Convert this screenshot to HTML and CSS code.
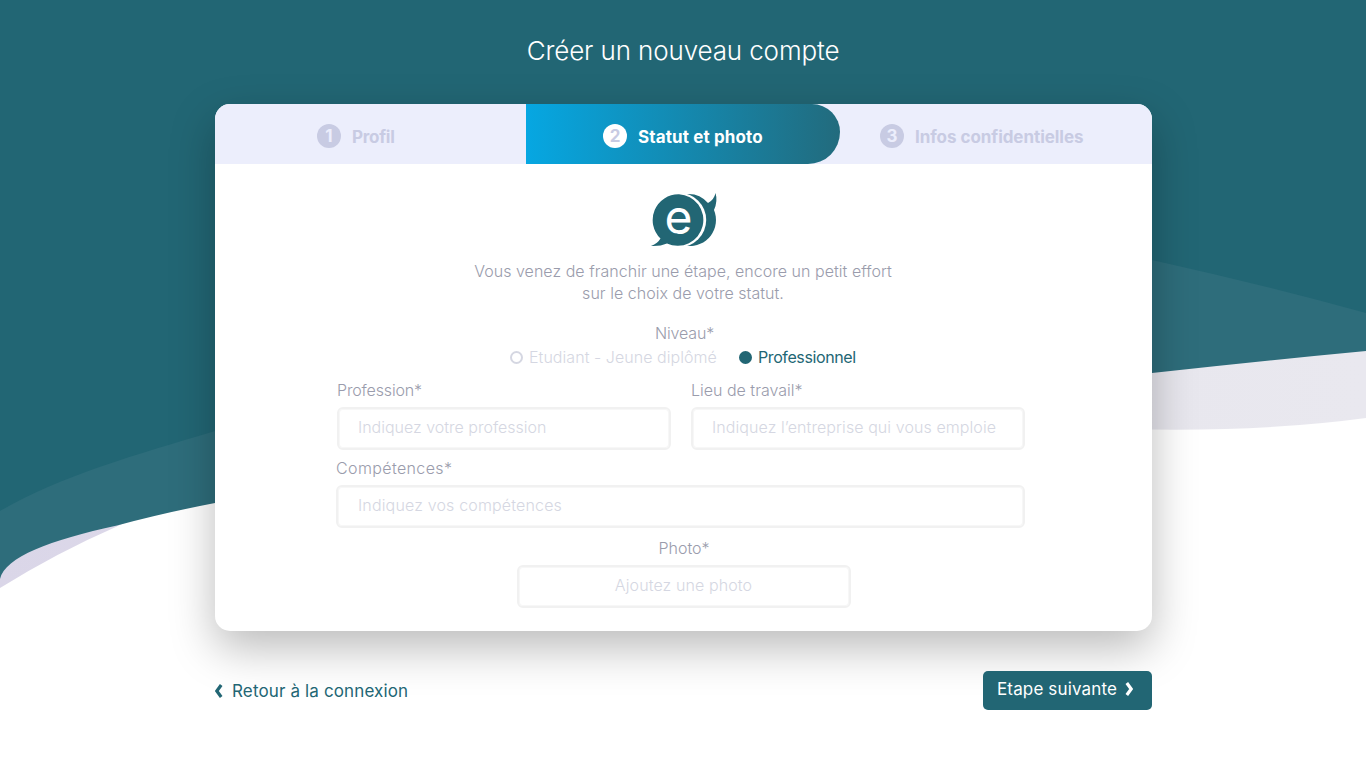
FILE: index.html
```html
<!DOCTYPE html>
<html lang="fr">
<head>
<meta charset="utf-8">
<title>Créer un nouveau compte</title>
<link rel="stylesheet" href="styles.css">
</head>
<body>
<svg class="waves" viewBox="0 0 1366 768" aria-hidden="true">
  <defs>
    <linearGradient id="mist" x1="0" x2="1" y1="0" y2="0"><stop offset="0" stop-color="#dad6e8"/><stop offset=".1" stop-color="#dcd8e9"/><stop offset=".85" stop-color="#e8e7ee"/><stop offset="1" stop-color="#e9e8ef"/></linearGradient>
  </defs>
  <path fill="url(#mist)" d="M0 588Q58 552 118 526C250 465 400 440 600 400C800 380 950 429 1152 429.5Q1270 431 1366 418V340H0Z"/>
  <path fill="#fff" d="M117 526.500Q165 505 230 480H1140V560H117Z"/>
  <path fill="#2e6d7b" d="M0 579C5 557 50 540 117 525.500Q163 513 215 503C450 440 750 405 1152 373Q1260 361 1366 351V200H0Z"/>
  <path fill="#226674" d="M0 511C60 476 135 455 215 431C500 320 850 200 1152 260Q1260 284 1366 313V0H0Z"/>
</svg>
<main class="page">
  <h1 class="title">Créer un nouveau compte</h1>
  <section class="card">
    <ol class="steps">
      <li class="step step-profile"><span class="num">1</span><span class="name-profile">Profil</span></li>
      <li class="step step-active"><span class="num">2</span><span class="name-status">Statut et photo</span></li>
      <li class="step step-private"><span class="num">3</span><span>Infos confidentielles</span></li>
    </ol>
    <div class="body">
      <svg class="logo" viewBox="0 0 66 54">
        <path fill="#226674" d="M34 1.200A26 26 0 0 1 57 10Q63 7 64.500 0Q67 8 63 17A26 26 0 0 1 36 52.800Z"/>
        <circle cx="28" cy="27" r="27.200" fill="#fff"/>
        <path fill="#226674" d="M28 1.200A25.800 25.800 0 1 1 16 50.500Q9 53.500 0 53Q7 50 9.500 45.500A25.800 25.800 0 0 1 28 1.200Z"/>
        <text class="logo-e" x="13.500" y="41.300">e</text>
      </svg>
      <p class="intro">Vous venez de franchir une étape, encore un petit effort<br>sur le choix de votre statut.</p>
      <div class="label level">Niveau*</div>
      <div class="choices">
        <label class="choice"><i class="dot"></i><span>Etudiant - Jeune diplômé</span></label>
        <label class="choice on"><i class="dot"></i><span>Professionnel</span></label>
      </div>
      <div class="row">
        <div class="field job"><div class="label">Profession*</div><div class="input">Indiquez votre profession</div></div>
        <div class="field place"><div class="label">Lieu de travail*</div><div class="input">Indiquez l’entreprise qui vous emploie</div></div>
      </div>
      <div class="field skills"><div class="label">Compétences*</div><div class="input">Indiquez vos compétences</div></div>
      <div class="field photo"><div class="label">Photo*</div><div class="input">Ajoutez une photo</div></div>
    </div>
  </section>
  <nav class="actions">
    <a class="back"><svg width="8" height="14" viewBox="0 0 8 14"><path d="M6.200 1L1.800 7L6.200 13"/></svg><span>Retour à la connexion</span></a>
    <button class="next"><span>Etape suivante</span><svg width="8" height="14" viewBox="0 0 8 14"><path d="M1.800 1L6.200 7L1.800 13"/></svg></button>
  </nav>
</main>
</body>
</html>
```
FILE: styles.css
```css
* { box-sizing: border-box; }
body { margin: 0; background: #fff; font-family: Inter, "Open Sans", sans-serif; font-size: 16px; font-weight: 300; }
.waves { position: absolute; inset: 0; width: 1366px; height: 768px; z-index: -1; }
.page { width: 937px; height: 768px; margin: 0 0 0 215px; }
.title { margin: 0; height: 104px; line-height: 102px; text-align: center; text-indent: -1px; color: #fff; font-size: 26px; font-weight: 350; letter-spacing: -.13px; }
.card { height: 527px; border-radius: 15px; background: #fff; box-shadow: 0 17px 45px rgba(0,0,0,.27); overflow: hidden; }
.steps { display: grid; grid-template-columns: 311px 314px 312px; height: 60px; margin: 0; padding: 0; list-style: none; background: #eceefc; }
.step { display: flex; padding-top: 20px; gap: 11px; color: #c8cbe3; font-size: 17px; font-weight: 700; line-height: 26px; letter-spacing: -.05px; white-space: nowrap; }
.step-profile { padding-left: 102px; }
.step-active { padding-left: 77px; color: #fff; background: linear-gradient(90deg, #06a7e2, #226b7d); border-radius: 0 28px 32px 0; }
.step-private { padding-left: 40px; }
.name-profile { letter-spacing: -.25px; }
.name-status { letter-spacing: .12px; }
.num { width: 24px; height: 24px; border-radius: 50%; background: #c8cbe3; color: #eceefc; text-align: center; line-height: 24px; }
.step-active .num { background: #fff; color: #c8cbe3; }
.body { padding: 29px 127px 0 122px; color: #9a9cac; }
.logo { display: block; width: 66px; height: 54px; margin-left: 314px; overflow: visible; }
.logo-e { font: 400 48px Inter, sans-serif; fill: #fff; }
.intro { margin: 13px 0 0 4px; text-align: center; line-height: 22px; white-space: nowrap; letter-spacing: .03px; }
.label { height: 22px; line-height: 22px; }
.level { margin: 18px 0 0 7px; text-align: center; letter-spacing: -.15px; }
.choices { display: flex; gap: 22px; margin: 2px 0 0 173px; line-height: 22px; color: #d5d7e2; letter-spacing: .05px; }
.choice { display: flex; align-items: center; gap: 6px; }
.dot { width: 13px; height: 13px; border: 2px solid #d5d7e2; border-radius: 50%; }
.on { color: #226674; font-weight: 400; letter-spacing: -.38px; }
.on .dot { background: #226674; border-color: #226674; }
.row { display: grid; grid-template-columns: 334px 334px; gap: 20px; margin-top: 11px; }
.job .label { letter-spacing: -.15px; }
.place .input { letter-spacing: .08px; }
.input { height: 43px; margin-top: 6px; padding-left: 19px; border: 2px solid #f1f1f1; border-radius: 6px; box-shadow: inset 0 0 0 1px #f7f7f7; line-height: 36px; color: #d5d7e2; white-space: nowrap; }
.skills { margin: 7px 0 0 -1px; }
.skills .label { letter-spacing: .38px; }
.skills .input { padding-left: 20px; letter-spacing: .16px; }
.photo { width: 334px; margin: 9px 0 0 180px; text-align: center; }
.photo .input { padding: 0 1px 0 0; letter-spacing: .1px; }
.actions { display: flex; justify-content: space-between; align-items: flex-start; margin-top: 40px; color: #226674; font-size: 17px; font-weight: 400; }
.actions svg { fill: none; stroke: currentColor; stroke-width: 3.200; }
.back { display: flex; align-items: center; gap: 9px; height: 40px; letter-spacing: .14px; }
.next { display: flex; align-items: center; gap: 8px; width: 169px; height: 39px; padding: 0 0 3px 14px; border: 0; border-radius: 5px; background: #226674; color: #fff; font: inherit; letter-spacing: .14px; }
```
